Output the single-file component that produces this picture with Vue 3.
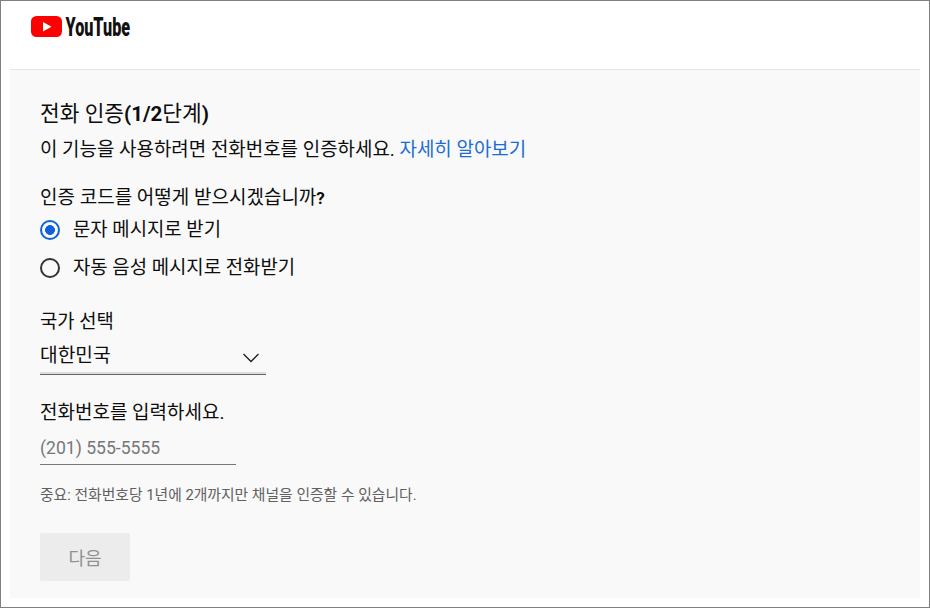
<script setup>
const options = [
  { label: '문자 메시지로 받기', checked: true },
  { label: '자동 음성 메시지로 전화받기', checked: false }
]
</script>

<template>
  <div class="frame">
    <header class="top">
      <svg class="logo" width="150" height="30" viewBox="0 0 150 30" role="img" aria-label="YouTube">
        <rect x="1" y="2" width="31" height="21" rx="5.5" fill="#ff0000" />
        <path d="M13 8 L21.5 12.7 L13 17.4 Z" fill="#fff" />
        <text transform="translate(35.5 22) scale(0.622 1)" class="word">YouTube</text>
      </svg>
    </header>
    <main class="panel">
      <h1 class="title">전화 인증<b>(1/2</b>단계<b>)</b></h1>
      <p class="intro">이 기능을 사용하려면 전화번호를 인증하세요. <a class="link">자세히 알아보기</a></p>
      <div class="question">인증 코드를 어떻게 받으시겠습니까<b class="q">?</b></div>
      <div class="radio-list">
        <div v-for="o in options" :key="o.label" class="radio-row">
          <span class="radio" :class="{ on: o.checked }"></span>
          <span class="radio-text">{{ o.label }}</span>
        </div>
      </div>
      <div class="field-label country-label">국가 선택</div>
      <div class="select">
        <span class="select-text">대한민국</span>
        <svg class="chev" width="18" height="10" viewBox="0 0 18 10"><path d="M1.5 1 L9 8.5 L16.5 1" fill="none" stroke="#222" stroke-width="1.4" /></svg>
      </div>
      <div class="field-label phone-label">전화번호를 입력하세요.</div>
      <div class="phone">(201) 555-5555</div>
      <p class="note">중요: 전화번호당 1년에 2개까지만 채널을 인증할 수 있습니다.</p>
      <button class="next" disabled>다음</button>
    </main>
  </div>
</template>

<style>
html, body { margin: 0; background: #fff; }
</style>

<style scoped>
.frame {
  box-sizing: border-box;
  width: 930px;
  height: 608px;
  border: 1px solid #808080;
  padding: 0 9px;
  background: #fff;
  font-family: Roboto, "Noto Sans CJK KR", sans-serif;
  color: #0d0d0d;
  overflow: hidden;
}
.top { height: 68px; box-sizing: border-box; padding: 13px 0 0 20px; }
.logo { display: block; }
.word { font-family: Roboto, sans-serif; font-weight: 900; font-size: 26px; fill: #111; }
.panel {
  box-sizing: border-box;
  height: 529px;
  border-top: 1px solid #e6e6e6;
  background: #f9f9f9;
  padding: 31px 30px 0;
}
.title { margin: 0; font-size: 21.4px; line-height: 26px; font-weight: 400; }
b { font-weight: 700; font-size: 20.5px; }
.q { font-size: 17px; }
.intro { margin: 11px 0 0; font-size: 18.95px; line-height: 24px; }
.link { color: #1a6dd6; }
.question { margin-top: 24px; font-size: 19px; line-height: 24px; }
.radio-list { margin-top: 2px; }
.radio-row { display: flex; align-items: center; gap: 13px; height: 38px; font-size: 18.85px; }
.radio-text { line-height: 24px; margin-top: -2px; }
.radio {
  box-sizing: border-box;
  width: 20px;
  height: 20px;
  margin-top: -2px;
  border: 2.2px solid #333;
  border-radius: 50%;
}
.radio.on {
  border-color: #0f62d6;
  background: radial-gradient(circle, #0f62d6 0 4.6px, transparent 5.2px);
}
.field-label { font-size: 18.8px; line-height: 24px; }
.country-label { margin-top: 22px; }
.select {
  box-sizing: border-box;
  width: 226px;
  height: 41px;
  display: flex;
  align-items: center;
  justify-content: space-between;
  padding: 0 6px 0 0;
  border-bottom: 1px solid #666;
  box-shadow: inset 0 -2px 0 #ddd;
  font-size: 19.2px;
}
.chev { margin-top: 7px; }
.phone-label { margin-top: 26px; font-size: 19px; }
.phone {
  box-sizing: border-box;
  width: 196px;
  height: 39px;
  margin-top: 1px;
  line-height: 44px;
  border-bottom: 1px solid #777;
  color: #777;
  font-size: 17.6px;
}
.note { margin: 21px 0 0; font-size: 14.8px; line-height: 18px; color: #606060; }
.next {
  display: block;
  width: 90px;
  height: 48px;
  margin-top: 29px;
  border: 0;
  border-radius: 2px;
  background: #ececec;
  color: #909090;
  font: inherit;
  font-size: 18px;
}
</style>
